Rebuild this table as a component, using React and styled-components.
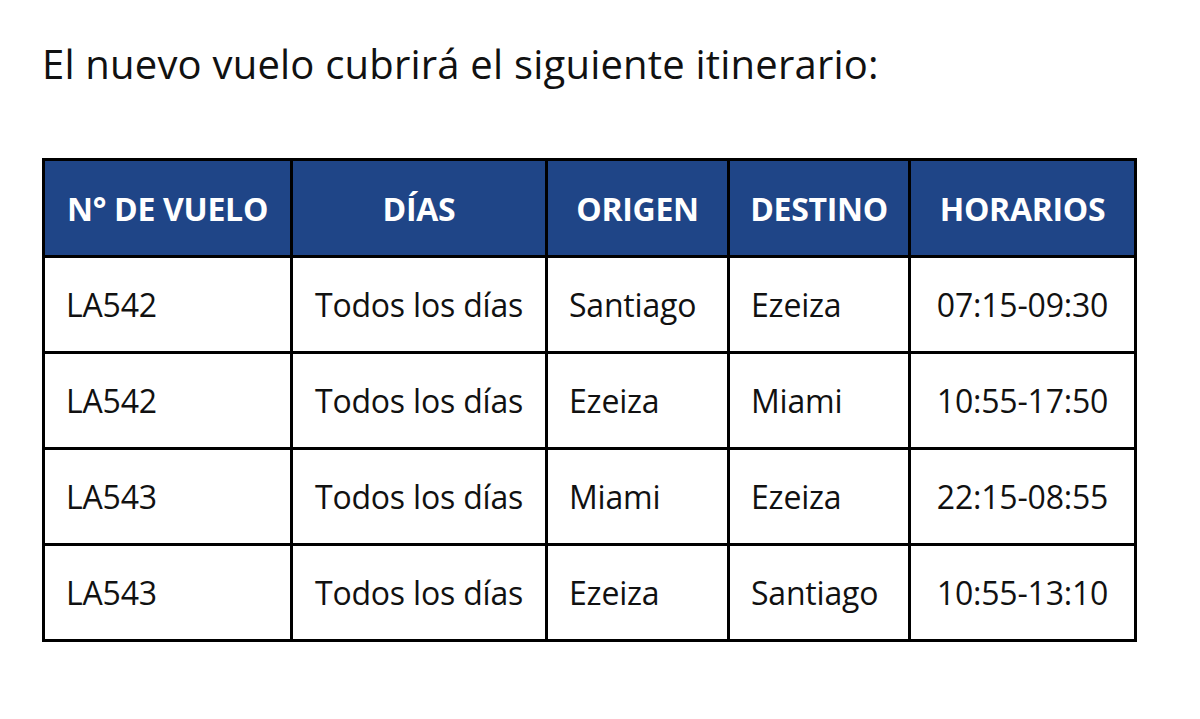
import styled, { createGlobalStyle } from "styled-components";

const GlobalStyle = createGlobalStyle`
    html, body {
        margin: 0;
        padding: 0;
        background: #ffffff;
    }
    body {
        font-family: "Open Sans", Lato, "Liberation Sans", sans-serif;
        color: #111111;
    }
`;

const columns = [
    { title: "N° DE VUELO", width: 248, align: "left" },
    { title: "DÍAS", width: 255, align: "center" },
    { title: "ORIGEN", width: 182, align: "left" },
    { title: "DESTINO", width: 181, align: "left" },
    { title: "HORARIOS", width: 226, align: "center" },
];

const flights = [
    ["LA542", "Todos los días", "Santiago", "Ezeiza", "07:15-09:30"],
    ["LA542", "Todos los días", "Ezeiza", "Miami", "10:55-17:50"],
    ["LA543", "Todos los días", "Miami", "Ezeiza", "22:15-08:55"],
    ["LA543", "Todos los días", "Ezeiza", "Santiago", "10:55-13:10"],
];

const App = () => {
    return (
        <Page>
            <GlobalStyle />
            <Title>El nuevo vuelo cubrirá el siguiente itinerario:</Title>
            <Table>
                <colgroup>
                    {columns.map((c) => (
                        <col key={c.title} style={{ width: c.width }} />
                    ))}
                </colgroup>
                <thead>
                    <tr>
                        {columns.map((c) => (
                            <HeadCell key={c.title}>{c.title}</HeadCell>
                        ))}
                    </tr>
                </thead>
                <tbody>
                    {flights.map((row, i) => (
                        <tr key={i}>
                            {row.map((value, j) => (
                                <Cell key={j} $align={columns[j].align}>
                                    {value}
                                </Cell>
                            ))}
                        </tr>
                    ))}
                </tbody>
            </Table>
        </Page>
    );
};

const Page = styled.div`
    width: 1200px;
    height: 719px;
    box-sizing: border-box;
    padding: 42px 0 0 42px;
`;

const Title = styled.h1`
    margin: 0 0 72px 0;
    font-size: 40px;
    line-height: 44px;
    font-weight: 400;
    letter-spacing: 0.2px;
    color: #111111;
`;

const Table = styled.table`
    border-collapse: collapse;
    table-layout: fixed;
    width: 1092px;
    border: 3px solid #000000;
`;

const HeadCell = styled.th`
    height: 94px;
    padding: 0;
    background: #1f4587;
    color: #ffffff;
    font-size: 32px;
    font-weight: 700;
    letter-spacing: -0.3px;
    text-align: center;
    border: 3px solid #000000;
    white-space: nowrap;
`;

const Cell = styled.td`
    height: 93px;
    padding: 0 ${(p) => (p.$align === "left" ? "6px" : "0")} 0 ${(p) => (p.$align === "left" ? "21px" : "0")};
    font-size: 32px;
    letter-spacing: -0.2px;
    color: #111111;
    text-align: ${(p) => p.$align};
    border: 3px solid #000000;
    white-space: nowrap;
`;

export default App;
